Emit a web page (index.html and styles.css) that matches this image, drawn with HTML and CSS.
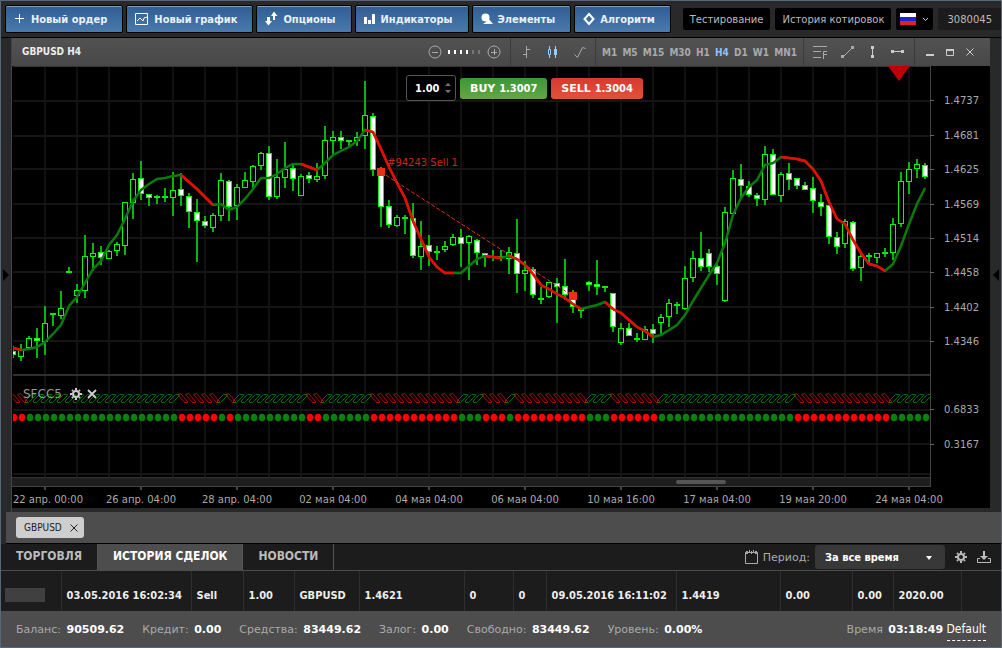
FILE: index.html
```html
<!DOCTYPE html>
<html lang="ru">
<head>
    <meta charset="UTF-8">
    <meta name="viewport" content="width=device-width, initial-scale=1.0">
    <title>GBPUSD H4</title>
    <link rel="stylesheet" href="styles.css">
</head>
<body>
    <header class="topbar">
        <nav class="main-menu">
            <button class="menu-btn">
                <svg width="12" height="12" viewBox="0 0 12 12"><path d="M5.5 1v9M1 5.500h9" stroke="#fff" fill="none"/></svg>
                Новый ордер
            </button>
            <button class="menu-btn">
                <svg width="14" height="13" viewBox="0 0 14 13"><path d="M.5.5h12v11H.5zM2 8l3-3 3 3 1-3 3-1" stroke="#fff" fill="none"/></svg>
                Новый график
            </button>
            <button class="menu-btn">
                <svg width="13" height="16" viewBox="0 0 13 16"><path d="M2 6h3v4h2l-3.500 4.500L0 10h2zM8 9V5H6l3-4.500L12.500 5H10v4z" fill="#fff"/></svg>
                Опционы
            </button>
            <button class="menu-btn">
                <svg width="12" height="12" viewBox="0 0 12 12"><path d="M0 4h3v7H0zM4 7h3v4H4zM8 1h3v10H8z" fill="#fff"/></svg>
                Индикаторы
            </button>
            <button class="menu-btn">
                <svg width="12" height="12" viewBox="0 0 12 12"><circle cx="4.500" cy="4.500" r="4" fill="#fff"/><path d="M7 5l5 6H2l3-2z" fill="#fff"/></svg>
                Элементы
            </button>
            <button class="menu-btn">
                <svg width="12" height="14" viewBox="0 0 12 14"><path d="M6 2l4.500 5L6 12 1.500 7z" stroke="#fff" stroke-width="2" fill="none"/></svg>
                Алгоритм
            </button>
        </nav>
        <div class="account">
            <a href="#" class="dark-btn">Тестирование</a>
            <a href="#" class="dark-btn">История котировок</a>
            <button class="dark-btn lang-btn" aria-label="Русский">
                <span class="flag"></span>
                <svg width="7" height="5" viewBox="0 0 7 5"><path d="M1 1l2.500 2.500L6 1" stroke="#ccc" fill="none"/></svg>
            </button>
            <span class="account-id">3080045</span>
        </div>
    </header>

    <main class="workspace">
        <button class="rail" aria-label="Левая панель">
            <svg width="6" height="12" viewBox="0 0 6 12"><path d="M0 0l6 6-6 6z" fill="#000"/></svg>
        </button>

        <section class="panel">
            <div class="panel-header">
                <h1 class="panel-title">GBPUSD H4</h1>
                <div class="tool-group zoom-group">
                    <button class="icon-btn" aria-label="Уменьшить"><svg width="14" height="14" viewBox="0 0 14 14"><circle cx="7" cy="7" r="6" stroke="#aaa" fill="none"/><path d="M4 7.500h6" stroke="#aaa"/></svg></button>
                    <svg width="33" height="6" viewBox="0 0 33 6"><path d="M0 1h2v4H0zM6 1h2v4H6zM12 1h2v4h-2zM18 1h2v4h-2z" fill="#fff"/><path d="M24 1h2v4h-2zM30 1h2v4h-2z" fill="#777"/></svg>
                    <button class="icon-btn" aria-label="Увеличить"><svg width="14" height="14" viewBox="0 0 14 14"><circle cx="7" cy="7" r="6" stroke="#aaa" fill="none"/><path d="M4 7.500h6M7.500 4v6" stroke="#aaa"/></svg></button>
                </div>
                <div class="tool-group type-group">
                    <button class="icon-btn" aria-label="Бары"><svg width="8" height="14" viewBox="0 0 8 14"><path d="M3.500 1v12M4 4.500h3M0 9.500h3" stroke="#aaa" fill="none"/></svg></button>
                    <button class="icon-btn" aria-label="Свечи"><svg width="10" height="14" viewBox="0 0 10 14"><path d="M1.500 1v3M1.500 10v3M.5 4.500h2v5h-2zM7.500 1v12" stroke="#9cf" fill="none"/><path d="M6 4h3v6H6z" fill="#9cf"/></svg></button>
                    <button class="icon-btn" aria-label="Линия"><svg width="13" height="14" viewBox="0 0 13 14"><path d="M.5 9.500l3 3 5-10 3 1" stroke="#aaa" fill="none"/></svg></button>
                </div>
                <div class="tool-group timeframes">
                    <button class="tf">M1</button>
                    <button class="tf">M5</button>
                    <button class="tf">M15</button>
                    <button class="tf">M30</button>
                    <button class="tf">H1</button>
                    <button class="tf active">H4</button>
                    <button class="tf">D1</button>
                    <button class="tf">W1</button>
                    <button class="tf">MN1</button>
                </div>
                <div class="tool-group draw-group">
                    <button class="icon-btn" aria-label="Фибоначчи"><svg width="15" height="14" viewBox="0 0 15 14"><path d="M0 1.500h14M0 6.500h8M0 12.500h8M10.500 14V6.500H14M11 9.500h3" stroke="#aaa" fill="none"/></svg></button>
                    <button class="icon-btn" aria-label="Линия тренда"><svg width="14" height="14" viewBox="0 0 14 14"><path d="M2 12L12 2" stroke="#aaa"/><path d="M0 10h3v3H0zM10 1h3v3h-3z" fill="#aaa"/></svg></button>
                    <button class="icon-btn" aria-label="Вертикальная линия"><svg width="10" height="14" viewBox="-3 0 10 14"><path d="M0 1h3v3H0zM0 10h3v3H0zM1 3h1v8H1z" fill="#ccc"/></svg></button>
                    <button class="icon-btn" aria-label="Горизонтальная линия"><svg width="14" height="4" viewBox="0 0 14 4"><path d="M0 0h3v3H0zM10 0h3v3h-3zM2 1h9v1H2z" fill="#ccc"/></svg></button>
                </div>
                <div class="tool-group window-group">
                    <button class="icon-btn" aria-label="Свернуть"><svg width="8" height="8" viewBox="0 0 8 8"><path d="M0 6h8v2H0z" fill="#ccc"/></svg></button>
                    <button class="icon-btn" aria-label="Развернуть"><svg width="8" height="8" viewBox="0 0 8 8"><path d="M.5 1v6.500h7V1" stroke="#ccc" fill="none"/><path d="M0 1h8v2H0z" fill="#ccc"/></svg></button>
                    <button class="icon-btn" aria-label="Закрыть"><svg width="8" height="8" viewBox="0 0 8 8"><path d="M.5.5l7 7M7.500.5l-7 7" stroke="#ccc"/></svg></button>
                </div>
            </div>

            <div class="chart">
                <svg id="plot" class="plot" viewBox="0 0 978 442"></svg>
                <div class="trade-box">
                    <div class="volume">
                        <input type="text" class="volume-input" value="1.00" aria-label="Объем">
                        <svg width="6" height="12" viewBox="0 0 6 12"><path d="M0 4l3-3 3 3zM0 8l3 3 3-3z" fill="#777"/></svg>
                    </div>
                    <button class="trade-btn buy">BUY <span class="quote">1.3007</span></button>
                    <button class="trade-btn sell">SELL <span class="quote">1.3004</span></button>
                </div>
                <div class="indicator-label">
                    <span>SFCC5</span>
                    <button class="icon-btn gear-btn" aria-label="Настройки индикатора"><svg class="gear" width="12" height="12" viewBox="0 0 12 12"><circle cx="6" cy="6" r="3" stroke="#ccc" stroke-width="2" fill="none"/><path d="M6 0v2M6 10v2M0 6h2M10 6h2M2 2l1 1M9 9l1 1M2 10l1-1M9 3l1-1" stroke="#ccc" stroke-width="2"/></svg></button>
                    <button class="icon-btn" aria-label="Удалить индикатор"><svg width="10" height="10" viewBox="0 0 10 10"><path d="M1 1l8 8M9 1L1 9" stroke="#ccc" stroke-width="2"/></svg></button>
                </div>
            </div>
        </section>

        <button class="rail rail-right" aria-label="Правая панель">
            <svg width="6" height="12" viewBox="0 0 6 12"><path d="M6 0L0 6l6 6z" fill="#000"/></svg>
        </button>
    </main>

    <div class="chart-tabs">
        <div class="chart-tab">
            <span>GBPUSD</span>
            <button class="icon-btn" aria-label="Закрыть график"><svg width="8" height="8" viewBox="0 0 8 8"><path d="M.5.5l7 7M7.500.5l-7 7" stroke="#222"/></svg></button>
        </div>
    </div>

    <section class="bottom">
        <div class="bottom-bar">
            <a href="#" class="tab">ТОРГОВЛЯ</a>
            <a href="#" class="tab active">ИСТОРИЯ СДЕЛОК</a>
            <a href="#" class="tab">НОВОСТИ</a>
            <div class="period">
                <svg width="13" height="14" viewBox="0 0 13 14"><path d="M.5 2.500h12v11H.5z" stroke="#aaa" fill="none"/><path d="M1 1h2v3H1zM4 0h1v3H4zM6 1h1v3H6zM8 0h1v3H8zM10 1h2v3h-2z" fill="#aaa"/></svg>
                <label for="period">Период:</label>
                <div class="select-wrap">
                    <select id="period">
                        <option>За все время</option>
                        <option>Неделя</option>
                        <option>Месяц</option>
                    </select>
                </div>
                <button class="icon-btn gear-btn" aria-label="Настройки"><svg class="gear" width="12" height="12" viewBox="0 0 12 12"><circle cx="6" cy="6" r="3" stroke="#bbb" stroke-width="2" fill="none"/><path d="M6 0v2M6 10v2M0 6h2M10 6h2M2 2l1 1M9 9l1 1M2 10l1-1M9 3l1-1" stroke="#bbb" stroke-width="2"/></svg></button>
                <button class="icon-btn" aria-label="Скачать"><svg width="14" height="13" viewBox="0 0 14 13"><path d="M3 7.500H.5v4h13v-4H11" stroke="#bbb" fill="none"/><path d="M6 0h2v5h3L7 9 3 5h3z" fill="#bbb"/></svg></button>
            </div>
        </div>
        <table class="history">
            <colgroup>
                <col class="c-id"><col class="c-date"><col class="c-type"><col class="c-vol"><col class="c-sym"><col class="c-price"><col class="c-sl">
                <col class="c-tp"><col class="c-date"><col class="c-close"><col class="c-swap"><col class="c-fee"><col class="c-profit"><col>
            </colgroup>
            <tbody>
                <tr>
                    <td class="id-cell"><span class="id-mask"></span></td>
                    <td>03.05.2016 16:02:34</td>
                    <td>Sell</td>
                    <td>1.00</td>
                    <td>GBPUSD</td>
                    <td>1.4621</td>
                    <td>0</td>
                    <td>0</td>
                    <td>09.05.2016 16:11:02</td>
                    <td>1.4419</td>
                    <td>0.00</td>
                    <td>0.00</td>
                    <td>2020.00</td>
                    <td></td>
                </tr>
            </tbody>
        </table>
    </section>

    <footer class="status">
        <span>Баланс: <b>90509.62</b></span>
        <span>Кредит: <b>0.00</b></span>
        <span>Средства: <b>83449.62</b></span>
        <span>Залог: <b>0.00</b></span>
        <span>Свободно: <b>83449.62</b></span>
        <span>Уровень: <b>0.00%</b></span>
        <span class="clock">Время <b>03:18:49</b> <a href="#" class="profile">Default</a></span>
    </footer>

    <script src="chart.js"></script>
</body>
</html>
```

FILE: styles.css
```css
* {
    margin: 0;
    padding: 0;
    box-sizing: border-box;
}

body {
    display: flex;
    flex-direction: column;
    min-height: 100vh;
    background-color: #292929;
    border: 1px solid #56677a;
    font-family: "DejaVu Sans", Verdana, sans-serif;
    font-size: 11px;
    color: #aaa;
}

button {
    border: none;
    background: none;
    font: inherit;
    color: inherit;
    cursor: pointer;
}

a {
    color: inherit;
    text-decoration: none;
}

svg {
    display: block;
}

/* top bar */
.topbar {
    display: flex;
    justify-content: space-between;
    align-items: center;
    height: 37px;
    padding-left: 4px;
    border-bottom: 1px solid #000;
}

.main-menu, .account {
    display: flex;
}

.main-menu {
    gap: 3px;
}

.menu-btn {
    display: flex;
    align-items: center;
    gap: 5px;
    height: 28px;
    padding: 0 15px 0 8px;
    border: 1px solid #000;
    border-radius: 2px;
    background: linear-gradient(#2f5d94, #4a7aad);
    box-shadow: inset 0 1px 0 #7f9fc2;
    color: #e8f0f8;
    font-family: "DejaVu Sans Condensed", "DejaVu Sans", Tahoma, sans-serif;
    font-size: 11px;
    font-weight: bold;
    white-space: nowrap;
}

.account {
    gap: 5px;
}

.dark-btn, .account-id {
    display: flex;
    align-items: center;
    height: 22px;
    padding: 0 7px;
    border-radius: 2px;
    background-color: #000;
    color: #bbb;
    font-size: 10px;
    white-space: nowrap;
}

.lang-btn {
    gap: 6px;
    padding: 0 4px;
}

.flag {
    width: 16px;
    height: 12px;
    background: linear-gradient(#fff 4px, #22c 4px 8px, #d22 8px);
}

.account-id {
    padding: 0 9px;
    background-color: #1c1c1c;
}

/* workspace */
.workspace {
    display: flex;
}

.rail {
    display: flex;
    align-items: center;
    justify-content: center;
    width: 11px;
    border-right: 1px solid #444;
}

.rail-right {
    border-right: none;
}

.panel {
    flex: 1;
    min-width: 0;
    padding-bottom: 4px;
}

.panel-header {
    display: flex;
    height: 28px;
    background: linear-gradient(#525252, #484848);
}

.panel-title {
    flex: 1;
    padding-left: 10px;
    line-height: 28px;
    font-family: "DejaVu Sans Condensed", "DejaVu Sans", Tahoma, sans-serif;
    font-size: 10px;
    color: #eee;
}

.tool-group {
    display: flex;
    align-items: center;
    justify-content: space-between;
    border-left: 1px solid #3a3a3a;
}

.icon-btn {
    display: flex;
    align-items: center;
    justify-content: center;
}

.zoom-group {
    gap: 6px;
    padding-right: 9px;
    border-left: none;
}

.type-group {
    width: 85px;
    padding: 0 8px 0 12px;
}

.timeframes {
    width: 208px;
    padding: 0 6px;
}

.tf {
    font-family: "DejaVu Sans Condensed", "DejaVu Sans", Tahoma, sans-serif;
    font-size: 10px;
    font-weight: bold;
}

.tf.active {
    color: #8fc1f5;
}

.draw-group {
    width: 111px;
    padding: 0 9px;
}

.window-group {
    width: 76px;
    padding: 0 16px 0 11px;
}

.chart {
    position: relative;
    background-color: #000;
}

.plot {
    width: 100%;
    height: auto;
}

.plot text {
    font-size: 10px;
    fill: #aaa;
}

.plot .order-text {
    fill: #c8281c;
}

.trade-box {
    position: absolute;
    top: 9px;
    left: 394px;
    display: flex;
    align-items: center;
    gap: 4px;
}

.volume {
    display: flex;
    align-items: center;
    justify-content: space-between;
    width: 50px;
    height: 26px;
    padding: 0 4px 0 8px;
    border: 1px solid #555;
    border-radius: 3px;
    background-color: #000;
}

.volume-input {
    width: 28px;
    border: none;
    background: none;
    color: #fff;
    font: bold 11px "DejaVu Sans Condensed", "DejaVu Sans", Tahoma, sans-serif;
}

.trade-btn {
    height: 21px;
    padding: 0 10px;
    border-radius: 3px;
    color: #fff;
    font-weight: bold;
    font-size: 11px;
}

.quote {
    font-family: "DejaVu Sans Condensed", "DejaVu Sans", Tahoma, sans-serif;
}

.buy {
    background: linear-gradient(#3d9638, #62a743);
}

.sell {
    background: linear-gradient(#d63a31, #e35137);
}

.indicator-label {
    position: absolute;
    top: 321px;
    left: 11px;
    display: flex;
    align-items: center;
    gap: 5px;
    font-size: 12px;
    color: #999;
}

.gear-btn {
    margin-left: 3px;
}

/* opened charts */
.chart-tabs {
    height: 32px;
    margin-left: 5px;
    padding: 5px 10px;
    background-color: #4d4d4d;
    border-bottom: 1px solid #000;
}

.chart-tab {
    display: inline-flex;
    align-items: center;
    gap: 8px;
    height: 21px;
    padding: 0 6px 0 8px;
    border-radius: 3px;
    background-color: #cecece;
    color: #222;
    font-family: "DejaVu Sans Condensed", "DejaVu Sans", Tahoma, sans-serif;
    font-size: 10px;
}

/* deals */
.bottom {
    flex: 1;
    background-color: #1c1c1c;
}

.bottom-bar {
    display: flex;
    height: 27px;
    border-bottom: 1px solid #4d4d4d;
}

.tab {
    padding: 0 15px;
    border-right: 1px solid #555;
    line-height: 25px;
    font-family: "DejaVu Sans Condensed", "DejaVu Sans", Tahoma, sans-serif;
    font-size: 12px;
    font-weight: bold;
    color: #bbb;
}

.tab.active {
    background-color: #4d4d4d;
    color: #fff;
}

.period {
    display: flex;
    align-items: center;
    gap: 5px;
    margin-left: auto;
    padding-right: 10px;
}

.period .gear-btn {
    margin: 0 5px;
}

.select-wrap {
    position: relative;
}

.select-wrap::after {
    content: "";
    position: absolute;
    right: 13px;
    top: 11px;
    border: 3px solid transparent;
    border-top: 4px solid #fff;
    pointer-events: none;
}

.select-wrap select {
    appearance: none;
    width: 130px;
    height: 24px;
    padding: 0 10px;
    border: none;
    border-radius: 3px;
    background-color: #383838;
    color: #fff;
    font: bold 11px "DejaVu Sans Condensed", "DejaVu Sans", Tahoma, sans-serif;
}

.history {
    width: 100%;
    table-layout: fixed;
    border-collapse: collapse;
}

.history td {
    height: 40px;
    padding: 8px 0 0 5px;
    border-right: 1px solid #2e2e2e;
    color: #eee;
    font-family: "DejaVu Sans Condensed", "DejaVu Sans", Tahoma, sans-serif;
    font-size: 11px;
    font-weight: bold;
    white-space: nowrap;
}

.history td:last-child {
    border-right: none;
}

.history .id-cell {
    padding-left: 4px;
}

.id-mask {
    display: block;
    width: 40px;
    height: 14px;
    background-color: #404040;
}

.c-id { width: 60px; }
.c-date { width: 130px; }
.c-type { width: 52px; }
.c-vol { width: 51px; }
.c-sym { width: 65px; }
.c-price { width: 105px; }
.c-sl { width: 49px; }
.c-tp { width: 33px; }
.c-close { width: 104px; }
.c-swap { width: 72px; }
.c-fee { width: 41px; }
.c-profit { width: 68px; }

/* status line */
.status {
    display: flex;
    align-items: center;
    gap: 18px;
    height: 36px;
    padding: 0 15px;
    background-color: #4d4d4d;
    white-space: nowrap;
}

.status b {
    margin-left: 2px;
    color: #fff;
}

.clock {
    margin-left: auto;
}

.profile {
    padding-bottom: 4px;
    border-bottom: 1px dashed #fff;
    color: #fff;
    font-family: "DejaVu Sans Condensed", "DejaVu Sans", Tahoma, sans-serif;
    font-size: 12px;
}
```

FILE: chart.js
```js
// [high, body top, body bottom, low, filled]
const candles = [
    [280,285,289,292,1],[278,284,291,295,0],[270,272,282,283,0],[262,272,275,292,1],[240,257,276,289,0],
    [247,247,249,260,0],[225,242,250,253,0],[201,205,207,207,0],[218,224,230,237,0],[169,190,225,232,0],
    [177,187,191,205,0],[180,186,192,199,1],[184,185,193,193,0],[176,178,185,190,0],[136,136,180,189,0],
    [107,113,137,153,0],[95,112,128,134,1],[128,128,132,140,1],[129,130,132,138,0],[122,130,132,136,0],
    [106,124,132,150,0],[107,123,130,140,1],[127,130,146,162,1],[133,146,155,196,1],[150,155,160,162,1],
    [147,149,162,166,0],[107,114,150,155,0],[114,115,141,155,1],[118,121,140,154,0],[106,114,122,122,0],
    [99,100,116,122,0],[86,87,100,104,0],[80,87,131,134,1],[93,111,131,133,0],[76,103,112,122,0],
    [97,102,113,125,1],[108,110,130,130,0],[106,109,113,117,1],[97,110,114,116,0],[60,74,110,113,0],
    [65,71,75,89,0],[65,71,75,83,1],[74,74,76,80,0],[66,71,75,80,0],[15,49,70,83,0],
    [47,50,104,110,1],[101,102,141,161,1],[134,140,159,162,1],[149,151,160,161,0],[149,151,153,168,0],
    [137,152,190,192,1],[155,180,191,204,0],[169,179,186,200,1],[180,185,187,194,0],[175,180,184,186,0],
    [168,171,179,180,0],[163,171,178,201,1],[169,170,177,214,0],[173,174,187,199,1],[187,187,190,201,1],
    [184,190,192,195,0],[184,190,192,195,0],[181,186,193,208,0],[153,187,208,227,1],[195,204,208,225,0],
    [201,203,229,232,1],[221,232,234,238,0],[216,216,231,232,0],[212,217,221,257,1],[193,220,229,234,1],
    [224,227,241,247,1],[242,243,245,252,0],[215,216,219,225,1],[194,218,221,229,1],[220,220,222,226,0],
    [227,227,261,266,1],[257,262,277,279,0],[257,262,270,270,1],[267,272,274,276,0],[260,263,274,274,0],
    [258,263,268,277,1],[248,251,257,270,0],[233,237,251,261,0],[236,238,240,248,0],[200,212,243,244,0],
    [185,192,212,216,0],[166,192,201,205,1],[183,187,201,206,1],[196,200,208,219,1],[141,146,235,236,0],
    [104,112,148,150,0],[98,113,120,133,1],[115,120,129,131,1],[127,129,133,140,1],[80,88,134,139,0],
    [83,88,129,129,1],[106,108,130,136,0],[97,107,114,124,1],[112,112,120,123,1],[116,119,124,124,1],
    [111,122,135,147,1],[128,136,141,150,1],[139,139,171,178,1],[166,171,181,188,1],[153,155,178,182,0],
    [155,156,203,205,1],[186,190,202,215,0],[187,189,191,197,0],[187,187,192,197,0],[182,186,188,191,0],
    [152,158,187,194,0],[106,115,158,161,0],[96,103,116,128,0],[93,98,103,112,0],[97,99,111,113,1]
];

const average = [
    282,284,283,281,276,268,259,240,231,217,203,195,179,169,153,135,124,118,113,112,110,109,116,123,131,
    139,138,144,141,133,123,112,112,108,102,98,98,101,104,97,89,85,81,75,64,66,83,101,117,132,
    155,173,191,201,207,207,207,200,193,190,191,192,190,193,199,208,219,223,228,232,238,243,241,239,236,
    243,247,254,261,265,271,269,264,259,249,235,222,209,197,177,149,132,121,114,99,97,91,92,93,95,
    103,115,136,153,158,174,187,198,200,205,198,180,158,138,122
];

// falling parts of the moving average, by candle index
const falling = [[0,1],[21,25],[36,38],[44,55],[59,61],[62,71],[74,80],[96,109]];
const redDots = [[0,1],[21,25],[27,27],[37,38],[45,55],[59,61],[63,71],[75,80],[98,109]];

const prices = [[34,"1.4737"],[69,"1.4681"],[103,"1.4625"],[138,"1.4569"],[172,"1.4514"],[206,"1.4458"],
    [241,"1.4402"],[275,"1.4346"],[343,"0.6833"],[378,"0.3167"]];
const dates = ["22 апр. 00:00","26 апр. 04:00","28 апр. 04:00","02 мая 04:00","04 мая 04:00",
    "06 мая 04:00","10 мая 16:00","17 мая 04:00","19 мая 20:00","24 мая 04:00"];

const step = 8;
const right = 918;

function xOf(i) {
    return 1 + i * step;
}

function inRanges(ranges, i) {
    return ranges.some(r => i >= r[0] && i <= r[1]);
}

function rect(x, y, w, h, fill) {
    return `<rect x="${x}" y="${y}" width="${w}" height="${h}" fill="${fill}"/>`;
}

function drawGrid() {
    let out = "";
    for (let x = 32; x < right; x += 32) {
        out += rect(x, 0, 2, 411, "#111");
    }
    [34, 69, 102, 137, 171, 205, 240, 274, 343, 377, 407].forEach(y => {
        out += rect(0, y, right, 2, "#151515");
    });
    out += rect(0, 0, right, 1, "#333");
    out += rect(0, 308, right, 2, "#303030");
    return out;
}

function drawCandles() {
    return candles.map(([high, top, bottom, low, filled], i) => {
        const x = xOf(i);
        let out = rect(x - 1, high, 2, top - high, "#00b80c") + rect(x - 1, bottom, 2, low - bottom, "#00b80c");
        if (bottom - top <= 2) {
            return out + rect(x - 3, top, 6, 2, "#00f000");
        }
        return out + `<rect x="${x - 2.5}" y="${top + 0.5}" width="5" height="${bottom - top - 1}" fill="${filled ? "#fff" : "#000"}" stroke="#00ff00"/>`;
    }).join("");
}

function line(from, to, color) {
    const points = [];
    for (let i = from; i <= to; i++) {
        points.push(xOf(i) + "," + average[i]);
    }
    return `<polyline points="${points.join(" ")}" fill="none" stroke="${color}" stroke-width="2.5"/>`;
}

function drawAverage() {
    return line(0, average.length - 1, "#0a7a0a") + falling.map(r => line(r[0], r[1], "#f00")).join("");
}

function drawIndicator() {
    let out = "";
    for (let i = 0; i < candles.length; i++) {
        const x = xOf(i);
        const red = inRanges(redDots, i);
        const shape = red ? `M${x - 3.5} 328.5l7 8h3v-1l-7 -8z` : `M${x - 3.5} 336.5v-2l6 -6h4v1l-7 7z`;
        out += `<path d="${shape}" fill="none" stroke="${red ? "#b80000" : "#006a00"}"/>`;
        out += `<ellipse cx="${x + 1}" cy="351.5" rx="3.3" ry="3.7" fill="${red ? "#f00" : "#078007"}"/>`;
    }
    return out;
}

function drawOrder() {
    return `<path d="M369 106L561 230" stroke="#e0301e" stroke-dasharray="4 2" fill="none"/>`
        + rect(365, 102, 8, 8, "#ee2e1c") + rect(557, 226, 8, 8, "#ee2e1c")
        + `<text class="order-text" x="375" y="100">#94243 Sell 1</text>`
        + `<path d="M876 0h22l-11 15z" fill="#c00000"/>`;
}

function drawAxes() {
    let out = rect(0, 411, right, 10, "#1e1e1e") + rect(0, 411, right, 1, "#333") + rect(0, 420, right + 1, 1, "#444");
    out += `<rect x="664" y="414" width="50" height="4" rx="2" fill="#555"/>`;
    out += rect(right, 0, 1, 421, "#444");
    prices.forEach(([y, label]) => {
        out += rect(right, y, 4, 1, "#666") + `<text x="932" y="${y + 4}">${label}</text>`;
    });
    dates.forEach((label, i) => {
        const x = 33 + i * 96;
        // the first label stays inside the plot
        out += rect(x - 1, 421, 2, 3, "#444") + `<text x="${Math.max(x, 36)}" y="437" text-anchor="middle">${label}</text>`;
    });
    return out;
}

document.getElementById("plot").innerHTML =
    `<clipPath id="area"><rect x="1" y="0" width="${right}" height="411"/></clipPath>`
    + `<g clip-path="url(#area)">${drawGrid()}${drawCandles()}${drawAverage()}${drawIndicator()}</g>`
    + drawOrder() + drawAxes();
```
